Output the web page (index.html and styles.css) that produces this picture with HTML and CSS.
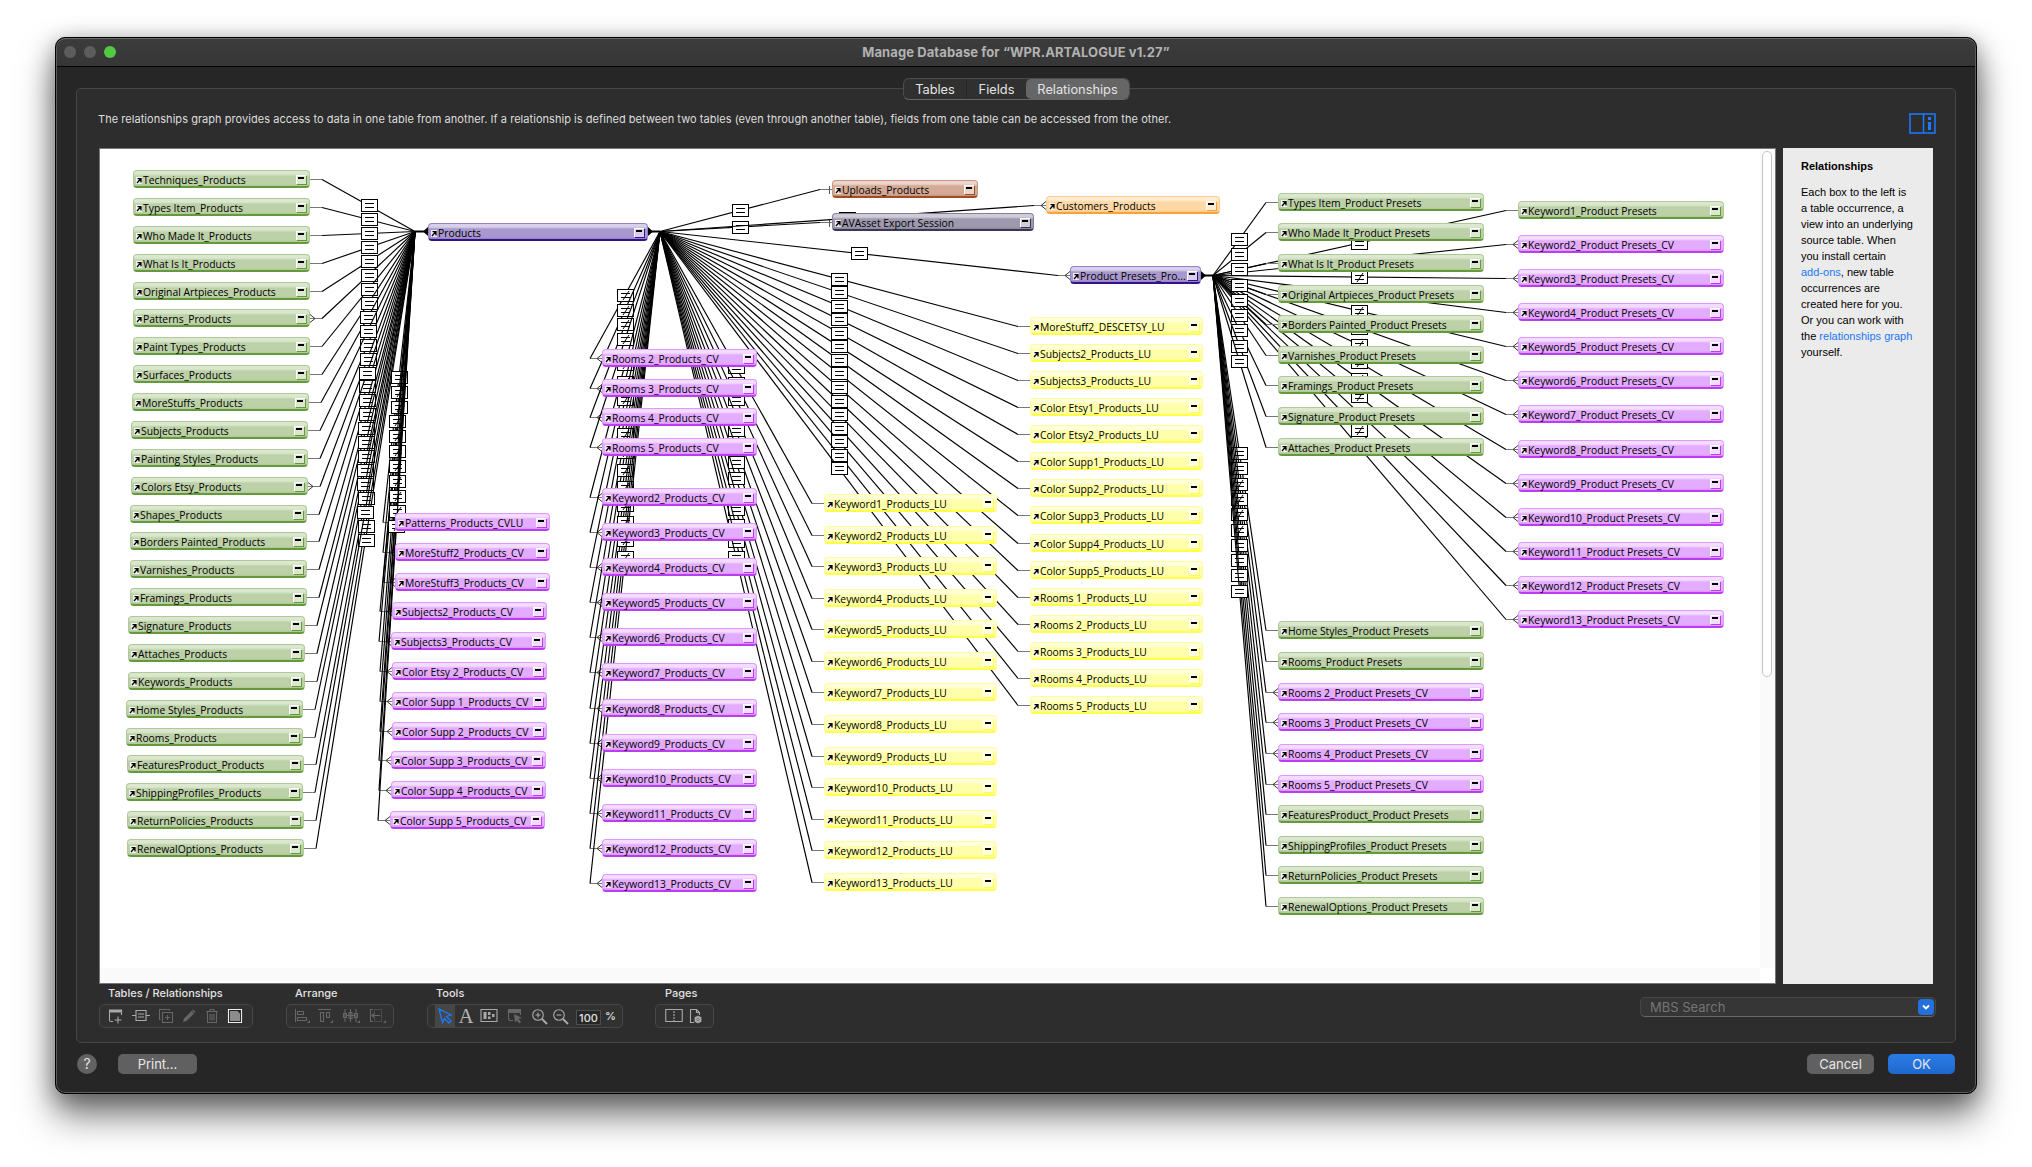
FILE: index.html
```html
<!DOCTYPE html>
<html lang="en">
<head>
<meta charset="utf-8">
<title>Manage Database</title>
<link rel="stylesheet" href="styles.css">
</head>
<body>
<div class="window">
  <header class="titlebar">
    <div class="lights"><i></i><i></i><i class="zoom"></i></div>
    <h1>Manage Database for “WPR.ARTALOGUE v1.27”</h1>
  </header>
  <main class="panel">
    <nav class="tabs"><span class="tab">Tables</span><span class="tab">Fields</span><span class="tab active">Relationships</span></nav>
    <div class="intro">
      <p>The relationships graph provides access to data in one table from another. If a relationship is defined between two tables (even through another table), fields from one table can be accessed from the other.</p>
      <svg class="toggle" width="27" height="21" viewBox="0 0 27 21"><path d="M1 1H26V20H1ZM14.500 1V20" fill="none" stroke="#1a7cff" stroke-width="1.500"/><path d="M19 4h3v3h-3zM18.500 9h3.500v8h-3v-6z" fill="#1a7cff"/></svg>
    </div>
    <section class="workspace">
      <div class="graph" id="graph">
        <svg class="links" id="links" width="1660" height="819" viewBox="100 149 1660 819"></svg>
        <div class="vscroll"><i></i></div>
        <div class="hscroll"></div>
      </div>
      <aside class="help">
        <h2>Relationships</h2>
        <p>Each box to the left is<br>a table occurrence, a<br>view into an underlying<br>source table. When<br>you install certain<br><a>add-ons</a>, new table<br>occurrences are<br>created here for you.<br>Or you can work with<br>the <a>relationships graph</a><br>yourself.</p>
      </aside>
    </section>
    <section class="toolbar">
      <div class="group g-tables"><h3>Tables / Relationships</h3><div class="tools">
        <svg width="16" height="16" viewBox="0 0 16 16" class="lit"><path d="M6 13.500H4Q2.500 13.500 2.500 12V2.500H14.500V7M11 8.500v7M7.500 12h7"/><path d="M2 1.500h13v3H2z" class="fill"/></svg>
        <svg width="18" height="16" viewBox="0 0 18 16" class="lit"><path d="M4 2.500H14V12.500H4ZM6 6h6M6 9h6M0 7.500h4M14 7.500h4"/></svg>
        <svg width="16" height="16" viewBox="0 0 16 16"><path d="M4.500 4.500H14.500V14.500H4.500ZM2.500 11.500H1.500V1.500H11.500V2.500M9.500 7v5M7 9.500h5"/></svg>
        <svg width="16" height="16" viewBox="0 0 16 16"><path d="M2 14l1-3.500L10.500 3l2.500 2.500L5.500 13zM12 1.500l2.500 2.500-1 1L11 2.500z" class="fill"/></svg>
        <svg width="16" height="16" viewBox="0 0 16 16"><path d="M2 3.500H14M6 3V1.500h4V3M3.500 4v10.500h9V4M6 6v6.500M8 6v6.500M10 6v6.500"/></svg>
        <svg width="16" height="16" viewBox="0 0 16 16"><path d="M1.500 1.500H14.500V14.500H1.500Z" stroke="#eee" fill="#222"/><path d="M3 3h7.500l2.500 2.500V13H3z" class="page"/></svg>
      </div></div>
      <div class="group g-arrange"><h3>Arrange</h3><div class="tools">
        <svg width="18" height="16" viewBox="0 0 18 16"><path d="M2.500 1v13M4.500 3.500h6v3h-6zM4.500 9.500h9v3h-9z"/><path d="M17 12v3h-3z" class="fill"/></svg>
        <svg width="18" height="16" viewBox="0 0 18 16"><path d="M2 1.500h13M4.500 4.500h3v9h-3zM10.500 4.500h3v5h-3z"/><path d="M17 12v3h-3z" class="fill"/></svg>
        <svg width="18" height="16" viewBox="0 0 18 16"><path d="M3 1v13M8.500 1v13M14 1v13M1.500 5.500h3v4h-3zM7 4.500h3v6H7zM12.500 5.500h3v4h-3zM4.500 7.500H12.500"/><path d="M18 12v3h-3z" class="fill"/></svg>
        <svg width="18" height="16" viewBox="0 0 18 16"><path d="M5 1.500H2.500V13.500H5M4 7.500h8M6 5.500l-2 2 2 2"/><path d="M6.500 1.500h7v12h-7z" stroke-dasharray="1 1"/><path d="M18 12v3h-3z" class="fill"/></svg>
      </div></div>
      <div class="group g-tools"><h3>Tools</h3><div class="tools">
        <span class="picked"><svg width="16" height="16" viewBox="0 0 16 16"><path d="M2 1L14 7L9.500 8.500L14 13L12 15L7.500 10.500L5.500 14.500Z" stroke="#1a7cff" stroke-width="1.300"/></svg></span>
        <span class="letter">A</span>
        <svg class="lit field" width="18" height="16" viewBox="0 0 18 16"><path d="M1 1.500H17V13.500H1Z"/><path d="M3.500 4h3v7h-3zM8 4h2.500v3H8zM12 6h2.500v3H12zM8 8.500h2.500V11H8z" class="fill"/></svg>
        <svg class="object" width="16" height="16" viewBox="0 0 16 16"><path d="M6 12.500H3.500Q1.500 12.500 1.500 10.500V2.500H13.500V7"/><path d="M1 1h13v4H1zM7 6l8 4-3.500 1 2.500 3-1.500 1.500-2.500-3-2 2z" class="fill"/></svg>
        <svg class="lit zin" width="17" height="17" viewBox="0 0 17 17"><circle cx="7" cy="7" r="5.300"/><path d="M11 11l5 5" stroke-width="2"/><path d="M4.500 7h5M7 4.500v5"/></svg>
        <svg class="lit zout" width="17" height="17" viewBox="0 0 17 17"><circle cx="7" cy="7" r="5.300"/><path d="M11 11l5 5" stroke-width="2"/><path d="M4.500 7h5"/></svg>
        <span class="pct">100</span><span class="sign">%</span>
      </div></div>
      <div class="group g-pages"><h3>Pages</h3><div class="tools">
        <svg width="18" height="16" viewBox="0 0 18 16" class="lit"><path d="M.75 1.500H17.250V13.500H.75Z"/><path d="M9 3v11" stroke-dasharray="2 1"/></svg>
        <svg width="14" height="16" viewBox="0 0 14 16" class="lit"><path d="M5 14.500H1.500V1.500H7.500L10.500 4.500V7M7.500 1.500v3h3"/><circle cx="9" cy="11.500" r="2.500" stroke-width="2"/><path d="M9 7.500v8M5.500 9.500l7 4M5.500 13.500l7-4" stroke-width=".8"/></svg>
      </div></div>
      <div class="search"><span>MBS Search</span><b><svg width="10" height="8" viewBox="0 0 10 8"><path d="M2 2.500L5 5.500L8 2.500" stroke="#fff" stroke-width="1.800" fill="none"/></svg></b></div>
    </section>
  </main>
  <footer class="actions">
    <span class="round">?</span>
    <button class="print">Print...</button>
    <button class="cancel">Cancel</button>
    <button class="ok">OK</button>
  </footer>
</div>
<script src="graph.js"></script>
</body>
</html>
```
FILE: styles.css
```css
* { box-sizing: border-box; margin: 0; padding: 0; }
body {
  height: 1167px; padding: 37px 55px 0 55px; background: #fff; overflow: hidden;
  font-family: Inter, "Liberation Sans", sans-serif; color: #e2e2e2;
}
.window {
  height: 1057px; display: flex; flex-direction: column;
  border: 1px solid #000; border-radius: 10px; background: #262626;
  box-shadow: inset 0 0 0 1px #5c5c5c, 0 22px 36px rgba(0,0,0,.5), 0 5px 24px rgba(0,0,0,.36);
}
.titlebar {
  height: 29px; flex: none; display: grid; grid-template-columns: 140px 1fr 140px; align-items: center;
  margin: 0 1px; padding-bottom: 1px; background: linear-gradient(#3c3c3c, #363636); border-top: 1px solid #6b6b6b; border-bottom: 1px solid #000;
  border-radius: 9px 9px 0 0;
}
.lights { display: flex; gap: 8px; padding-left: 7px; }
.lights i { width: 12px; height: 12px; border-radius: 50%; background: #5d5d5d; }
.lights .zoom { background: #52c843; }
.titlebar h1 { font-size: 13px; line-height: 16px; font-weight: 700; text-align: center; color: #b2b2b2; letter-spacing: .09px; }

.panel {
  margin: 21px 20px 0 20px; height: 955px; flex: none; display: flex; flex-direction: column;
  background: #2d2d2d; border: 1px solid #464646; border-radius: 5px; padding: 0 22px 0 23px;
}
.tabs {
  align-self: center; display: flex; height: 22px; width: 227px; margin-top: -11px;
  background: #303030; border: 1px solid #4c4c4c; border-bottom-color: #666; border-radius: 6px; overflow: hidden;
}
.tab { display: flex; align-items: center; justify-content: center; width: 59px; font-size: 12.800px; color: #e4e4e4; }
.tab:first-child { width: 63px; border-right: 1px solid #262626; }
.tab.active { width: 103px; background: #666; border-radius: 5px; }
.intro { display: flex; height: 48px; }
.intro p { flex: 1; font-size: 11px; line-height: 14px; letter-spacing: .047px; margin: 12px 0 0 -2px; white-space: nowrap; color: #dedede; }
.toggle { margin: 13px -3px 0 0; }

.workspace { display: flex; gap: 7px; height: 836px; flex: none; }
.graph { position: relative; width: 1677px; border: 1px solid #777; background: #fff; overflow: hidden; margin-left: -1px; }
.links { position: absolute; left: 0; top: 0; }
.vscroll { position: absolute; right: 0; top: 0; width: 15px; height: 819px; background: #fafafa; }
.vscroll i { position: absolute; left: 2px; top: 2px; width: 10px; height: 526px; background: #fff; border: 1px solid #c4c4c4; border-radius: 5px; }
.hscroll { position: absolute; left: 0; right: 15px; bottom: 0; height: 15px; background: #fafafa; }

.help { width: 150px; background: #ebebeb; color: #000; padding: 10px 0 0 18px; font: 11px/16px "Liberation Sans", sans-serif; white-space: nowrap; }
.help h2 { font-size: 11px; line-height: 16px; margin-bottom: 10px; }
.help a { color: #1a78f0; }

.toolbar { display: flex; margin-left: -1px; }
.group h3 { font-size: 11px; font-weight: 500; line-height: 14px; margin: 2px 0 4px 9px; color: #e2e2e2; white-space: nowrap; }
.tools { display: flex; align-items: center; height: 24px; border: 1px solid #474747; border-radius: 5px; background: #313131; }
.tools svg { fill: none; stroke: #666; stroke-width: 1.100; flex: none; }
.tools .lit { stroke: #a9a9a9; }
.tools .fill { fill: #666; stroke: none; }
.tools .lit .fill { fill: #a9a9a9; }
.tools .page { fill: #8c8c8c; stroke: none; }
.g-tables { width: 154px; margin-right: 33px; }
.g-tables .tools { padding-left: 7px; gap: 7px; }
.g-tables svg:first-child { margin-right: 2px; }
.g-tables svg:nth-child(2) { margin-right: 1px; }
.g-arrange { width: 108px; margin-right: 33px; }
.g-arrange .tools { padding-left: 6px; gap: 8px; }
.g-arrange svg:first-child { margin-right: -3px; }
.g-tools { width: 196px; margin-right: 32px; }
.g-tools .tools { padding-left: 7px; }
.g-pages { width: 59px; }
.g-pages .tools { padding-left: 9px; gap: 6px; }
.g-pages h3 { margin-left: 10px; }
.picked { display: flex; align-items: center; justify-content: center; width: 20px; height: 22px; background: #464646; }
.letter { width: 16px; margin-left: 3px; font: 21px/22px "Liberation Serif", serif; text-align: center; color: #b4b4b4; }
.field { margin-left: 6px; }
.object { margin-left: 9px; }
.zin { margin-left: 8px; }
.zout { margin-left: 4px; }
.pct { width: 25px; height: 15px; margin: 2px 0 0 7px; border: 1px solid #4e4e4e; background: #262626; font-size: 11px; font-weight: 500; line-height: 14px; text-align: center; }
.sign { margin-left: 4px; font-size: 11px; font-weight: 500; }
.search {
  margin: 13px -3px 0 auto; width: 296px; height: 20px; display: flex; align-items: center; justify-content: space-between;
  padding: 0 1px 0 9px; font-size: 13px; color: #757575; background: #363636; border: 1px solid #464646; border-bottom-color: #696969; border-radius: 5px;
}
.search b { display: flex; align-items: center; justify-content: center; width: 16px; height: 16px; border-radius: 4px; background: #2471dc; }

.actions { display: flex; align-items: center; height: 20px; margin: 11px 21px 0 21px; }
.round { width: 20px; height: 20px; border-radius: 50%; background: #626262; font-size: 14px; line-height: 20px; text-align: center; }
.actions button { height: 20px; border: 0; border-radius: 5px; background: #606060; color: #e6e6e6; font: 13px/20px Inter, sans-serif; }
.print { width: 79px; margin-left: 21px; }
.cancel { width: 67px; margin: 0 14px 0 auto; }
.actions .ok { width: 67px; background: linear-gradient(#2a7be6, #1f68cc); }

.node {
  position: absolute; height: 18px; display: flex; border-radius: 4px; color: #000;
  border: 1px solid var(--edge); border-bottom: 2px solid var(--dark);
  background: linear-gradient(var(--hi) 0 3px, var(--base) 5px 13px, var(--low) 15px);
  font: 11px/16px "Open Sans", "Noto Sans", sans-serif; padding: 1px 3px 0 2px;
}
.node .ref { margin-top: 5px; width: 6px; height: 7px; flex: none; background: rgba(255,255,255,.8); }
.node .name { flex: 1; min-width: 0; margin: 0 0 0 1px; white-space: nowrap; transform: scaleX(.94); transform-origin: 0 0; }
.node .fold { width: 10px; height: 9px; flex: none; margin-top: 3px; background: var(--hi); border: 1px solid #fff; border-width: 1px 0 0 1px; box-shadow: 1px 1px 0 var(--dark); }
.node .fold::before { content: ""; display: block; width: 6px; height: 2px; margin: 1px 0 0 1px; background: #000; }
.green { --base: #bdd1a9; --hi: #dbe7cf; --low: #aec794; --edge: #afca95; --dark: #649a3b; }
.purple { --base: #e4acff; --hi: #f3dcff; --low: #dc94fb; --edge: #dc9afb; --dark: #bb3df0; }
.yellow { --base: #ffffab; --hi: #ffffdc; --low: #ffff90; --edge: #ffff9a; --dark: #ffff4c; }
.violet { --base: #a898ce; --hi: #d8d0ea; --low: #9480c2; --edge: #9482c4; --dark: #33128c; }
.rust { --base: #d4a996; --hi: #ebd4c9; --low: #c8937a; --edge: #c99780; --dark: #a04c26; }
.slate { --base: #9e99ae; --hi: #cfccd8; --low: #8a849c; --edge: #857f9a; --dark: #3b3556; }
.orange { --base: #ffd8a6; --hi: #ffecd3; --low: #ffca85; --edge: #ffcb88; --dark: #f9a23a; }
```
FILE: graph.js
```js
const OX = 100, OY = 149;
const graph = document.getElementById('graph');
const links = document.getElementById('links');
let art = '';

function node(cls, x, y, w, name) {
  const el = document.createElement('div');
  el.className = 'node ' + cls;
  el.style.cssText = `left:${x - OX}px;top:${y - OY}px;width:${w}px`;
  el.innerHTML = `<svg class="ref" viewBox="0 0 6 7"><path d="M1 6L4.500 2M1.500 1.700H5V5.500" stroke="#000" stroke-width="1.300" fill="none"/></svg><span class="name">${name}</span><span class="fold"></span>`;
  graph.insertBefore(el, graph.querySelector('.vscroll'));
}

// side: -1 attaches at the left edge of the node, 1 at the right edge
function link(edge, y, side, hub, op, end) {
  const sx = edge + side * 12;
  art += `<path d="M${edge} ${y + .5}H${sx}" stroke="#777"/><path d="M${sx} ${y + .5}L${hub[0]} ${hub[1]}" stroke="#000" stroke-width="1.150"/>`;
  if (end === 'many') art += `<path d="M${edge} ${y - 3.500}L${edge + side * 5} ${y + .5}L${edge} ${y + 4.500}" stroke="#333" fill="none"/>`;
  if (end === 'one') art += `<path d="M${edge + side * 2.500} ${y - 3}V${y + 5}" stroke="#555"/>`;
  const mid = (sx + hub[0]) / 2;
  const mx = side > 0 ? Math.ceil(mid) : Math.floor(mid), my = Math.round((y + hub[1]) / 2);
  art += `<rect x="${mx - 7.500}" y="${my - 5.500}" width="16" height="12" fill="#fff" stroke="#000"/><path d="M${mx - 4} ${my - 1.500}h9M${mx - 4} ${my + 2.500}h9" stroke="#000"/>`;
  if (op === 'ne') art += `<path d="M${mx - 2} ${my + 5}L${mx + 4} ${my - 4}" stroke="#000"/>`;
}

const L = [415, 231.5], R = [660, 231.5], P = [1213, 275.5];

const a = [[133,170,'Techniques'],[133,198,'Types Item'],[133,226,'Who Made It'],[133,254,'What Is It'],[133,282,'Original Artpieces'],[133,309,'Patterns'],[133,337,'Paint Types'],[133,365,'Surfaces'],[132,393,'MoreStuffs'],[131,421,'Subjects'],[131,449,'Painting Styles'],[131,477,'Colors Etsy'],[130,505,'Shapes'],[130,532,'Borders Painted'],[130,560,'Varnishes'],[130,588,'Framings'],[128,616,'Signature'],[128,644,'Attaches'],[128,672,'Keywords'],[126,700,'Home Styles'],[126,728,'Rooms'],[127,755,'FeaturesProduct'],[126,783,'ShippingProfiles'],[127,811,'ReturnPolicies'],[127,839,'RenewalOptions']];
a.forEach(([x, y, n]) => node('green', x, y, 177, n + '_Products'));
const late = ['MoreStuffs', 'Subjects', 'Shapes', 'ShippingProfiles'];
[...a.filter(r => !late.includes(r[2])), ...a.filter(r => late.includes(r[2]))]
  .forEach(([x, y, n]) => link(x + 177, y + 9, 1, L, 'eq', /Patterns|Colors/.test(n) ? 'many' : ''));

[[395,513,'Patterns_Products_CVLU'],[395,543,'MoreStuff2_Products_CV'],[395,573,'MoreStuff3_Products_CV'],[392,602,'Subjects2_Products_CV'],[391,632,'Subjects3_Products_CV'],[392,662,'Color Etsy 2_Products_CV'],[392,692,'Color Supp 1_Products_CV'],[392,722,'Color Supp 2_Products_CV'],[391,751,'Color Supp 3_Products_CV'],[391,781,'Color Supp 4_Products_CV'],[390,811,'Color Supp 5_Products_CV']]
  .forEach(([x, y, n], i) => { node('purple', x, y, 155, n); link(x, y + 9, -1, L, i ? 'ne' : 'eq', 'many'); });

[349,379,408,438,488,523,558,593,628,663,699,734,769,804,839,874].forEach((y, i) => {
  node('purple', 602, y, 155, (i < 4 ? 'Rooms ' + (i + 2) : 'Keyword' + (i - 2)) + '_Products_CV');
  link(602, y + 9, -1, R, 'ne', 'many');
});
[494,526,557,589,620,652,683,715,747,778,810,841,873].forEach((y, i) => {
  node('yellow', 824, y, 173, `Keyword${i + 1}_Products_LU`);
  link(824, y + 9, -1, R, 'eq', '');
});
['MoreStuff2_DESCETSY','Subjects2_Products','Subjects3_Products','Color Etsy1_Products','Color Etsy2_Products','Color Supp1_Products','Color Supp2_Products','Color Supp3_Products','Color Supp4_Products','Color Supp5_Products','Rooms 1_Products','Rooms 2_Products','Rooms 3_Products','Rooms 4_Products','Rooms 5_Products'].forEach((n, i) => {
  const y = 317 + i * 27 + (i > 7 ? 1 : 0);
  node('yellow', 1030, y, 173, n + '_LU');
  link(1030, y + 9, -1, R, 'eq', '');
});

node('rust', 832, 180, 146, 'Uploads_Products');
link(832, 189, -1, R, 'eq', 'one');
link(832, 222, -1, R, 'eq', 'one');
node('orange', 1046, 196, 174, 'Customers_Products');
link(1046, 205, -1, R, 'eq', 'many');
node('slate', 832, 213, 202, 'AVAsset Export Session');
link(1070, 275, -1, R, 'eq', 'many');

[201,235,269,303,337,371,405,440,474,508,542,576,610].forEach((y, i) => {
  node(i ? 'purple' : 'green', 1518, y, 206, `Keyword${i + 1}_Product Presets${i ? '_CV' : ''}`);
  link(1518, y + 9, -1, P, i ? 'ne' : 'eq', i ? 'many' : '');
});
[[193,'Types Item'],[223,'Who Made It'],[254,'What Is It'],[285,'Original Artpieces'],[315,'Borders Painted'],[346,'Varnishes'],[376,'Framings'],[407,'Signature'],[438,'Attaches'],[621,'Home Styles'],[652,'Rooms'],[683,'Rooms 2'],[713,'Rooms 3'],[744,'Rooms 4'],[775,'Rooms 5'],[805,'FeaturesProduct'],[836,'ShippingProfiles'],[866,'ReturnPolicies'],[897,'RenewalOptions']].forEach(([y, n]) => {
  const cv = /Rooms \d/.test(n);
  node(cv ? 'purple' : 'green', 1278, y, 206, n + '_Product Presets' + (cv ? '_CV' : ''));
  link(1278, y + 9, -1, P, cv ? 'ne' : 'eq', cv ? 'many' : '');
});

node('violet', 428, 223, 220, 'Products');
node('violet', 1070, 266, 131, 'Product Presets_Pro...');
// hub connectors beside the two central tables
[[415, 428, 231.5], [660, 648, 231.5], [1213, 1201, 275.5]].forEach(([hx, ex, y]) => {
  const s = hx < ex ? -1 : 1;
  art += `<path d="M${hx} ${y}H${ex}" stroke="#000" stroke-width="2"/><path d="M${ex} ${y - 4.500}L${ex + s * 5} ${y}L${ex} ${y + 4.500}Z" fill="#000"/>`;
});
links.innerHTML = art;
```
